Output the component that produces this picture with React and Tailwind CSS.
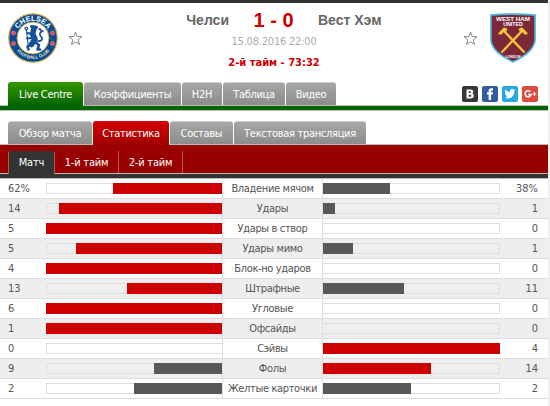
import clsx from 'clsx';

const mainTabs = [
  { label: 'Live Centre', width: 'w-[75px]', active: true },
  { label: 'Коэффициенты', width: 'w-[97px]' },
  { label: 'H2H', width: 'w-10' },
  { label: 'Таблица', width: 'w-[62px]' },
  { label: 'Видео', width: 'w-[50px]' },
];

const matchTabs = [
  { label: 'Обзор матча', width: 'w-[84px]' },
  { label: 'Статистика', width: 'w-[76px]', active: true },
  { label: 'Составы', width: 'w-[63px]' },
  { label: 'Текстовая трансляция', width: 'w-[132px]' },
];

// home / away bars are in pixels, lead marks the side drawn in red
const stats = [
  { name: 'Владение мячом', home: '62%', away: '38%', homeBar: 109, awayBar: 67, lead: 'home' },
  { name: 'Удары', home: 14, away: 1, homeBar: 163, awayBar: 12, lead: 'home' },
  { name: 'Удары в створ', home: 5, away: 0, homeBar: 176, awayBar: 0, lead: 'home' },
  { name: 'Удары мимо', home: 5, away: 1, homeBar: 146, awayBar: 30, lead: 'home' },
  { name: 'Блок-но ударов', home: 4, away: 0, homeBar: 176, awayBar: 0, lead: 'home' },
  { name: 'Штрафные', home: 13, away: 11, homeBar: 95, awayBar: 81, lead: 'home' },
  { name: 'Угловые', home: 6, away: 0, homeBar: 176, awayBar: 0, lead: 'home' },
  { name: 'Офсайды', home: 1, away: 0, homeBar: 176, awayBar: 0, lead: 'home' },
  { name: 'Сэйвы', home: 0, away: 4, homeBar: 0, awayBar: 177, lead: 'away' },
  { name: 'Фолы', home: 9, away: 14, homeBar: 68, awayBar: 108, lead: 'away' },
  { name: 'Желтые карточки', home: 2, away: 2, homeBar: 88, awayBar: 88, lead: null },
];

function Star() {
  return (
    <svg className="w-[15px] h-[15px]" viewBox="0 0 15 15" fill="#fff" stroke="#777" strokeWidth="0.9">
      <path d="M7.5 1.1 9.2 5.5 14 5.7 10.2 8.7 11.5 13.4 7.5 10.8 3.5 13.4 4.8 8.7 1 5.7 5.8 5.5Z" />
    </svg>
  );
}

function ChelseaLogo() {
  return (
    <svg className="w-[50px] h-[50px]" viewBox="0 0 50 50">
      <defs>
        <path id="cfcTop" d="M7.8 25A17.2 17.2 0 0 1 42.2 25" />
        <path id="cfcBottom" d="M4.2 25A20.8 20.8 0 0 0 45.8 25" />
      </defs>
      <circle cx="25" cy="25" r="24.2" fill="#064b95" stroke="#c9a53d" strokeWidth="1.2" />
      <circle cx="25" cy="25" r="16" fill="#fff" stroke="#c9a53d" strokeWidth="1" />
      <text fill="#fff" fontFamily="Liberation Sans, sans-serif" fontWeight="bold" fontSize="7.4" textAnchor="middle">
        <textPath href="#cfcTop" startOffset="50%">CHELSEA</textPath>
      </text>
      <text fill="#f5edc4" fontFamily="Liberation Sans, sans-serif" fontWeight="bold" fontSize="4.4" textAnchor="middle">
        <textPath href="#cfcBottom" startOffset="50%">FOOTBALL CLUB</textPath>
      </text>
      <g fill="#ee4056" stroke="#f08b98" strokeWidth="0.6">
        <circle cx="5.5" cy="20" r="2" />
        <circle cx="5.5" cy="30.5" r="2" />
        <circle cx="44.5" cy="20" r="2" />
        <circle cx="44.5" cy="30.5" r="2" />
      </g>
      <g fill="none" stroke="#164f9e" strokeLinecap="round" strokeLinejoin="round">
        <circle cx="18.3" cy="15.5" r="1.3" strokeWidth="1.2" />
        <path d="M18.5 17 20.6 36" strokeWidth="1.1" />
        <path d="M26 15.5 24.5 21 27 26 23.5 31.5" strokeWidth="5.6" />
        <path d="M24 21 19.2 20M24.5 25 19 25.5" strokeWidth="2" />
        <path d="M23.5 31 19.5 33.5 20.5 36.5M27.5 29.5 31 32 29.5 36.5H32" strokeWidth="2.6" />
        <path d="M29.5 28C33.5 28.5 35.5 26 33 23.6 31 21.5 31.5 19 34.8 18.2M33.5 17.2 31.5 16.5" strokeWidth="1.7" />
        <path d="M23.5 13.5 28.5 14.2" strokeWidth="3" />
      </g>
      <path d="M30.2 15.8 33 15.1" stroke="#e3344b" strokeWidth="0.9" />
    </svg>
  );
}

function WestHamLogo() {
  return (
    <svg className="w-[46px] h-[50px]" viewBox="0 0 46 50">
      <path
        d="M1 2.2Q23 .1 45 2.2V27C44.6 35.5 35 43.5 23 48.8 11 43.5 1.4 35.5 1 27Z"
        fill="#7c2839"
        stroke="#42b3df"
        strokeWidth="1.7"
      />
      <g fill="#fff" fontFamily="Liberation Sans, sans-serif" fontWeight="bold">
        <text x="6" y="8.2" fontSize="6" textLength="34" lengthAdjust="spacingAndGlyphs">WEST HAM</text>
        <text x="13.2" y="13" fontSize="4.6" textLength="19.6" lengthAdjust="spacingAndGlyphs">UNITED</text>
        <text x="15.5" y="44.6" fontSize="3.6" textLength="15" lengthAdjust="spacingAndGlyphs">LONDON</text>
      </g>
      <g stroke="#f6ca36" strokeWidth="2.3" fill="none">
        <path d="M13.5 17.5 34.5 39.5M32.5 17.5 11.5 39.5" />
      </g>
      <g fill="#f6ca36">
        <path d="M8 20.5 14 14.2 17.6 16 16.2 18.8 14 18.7 11 22Z" />
        <path d="M38 20.5 32 14.2 28.4 16 29.8 18.8 32 18.7 35 22Z" />
      </g>
    </svg>
  );
}

function Socials() {
  return (
    <div className="flex gap-1">
      <svg className="size-4" viewBox="0 0 16 16">
        <rect width="16" height="16" rx="2" fill="#373737" />
        <path fill="#fff" fillRule="evenodd" d="M4.5 3.5H8.6C10.4 3.5 11.3 4.4 11.3 5.7 11.3 6.6 10.8 7.3 10 7.6 11.1 7.9 11.8 8.7 11.8 9.8 11.8 11.5 10.6 12.4 8.6 12.4H4.5ZM6.8 5.2V7H8Q9 7 9 6.1 9 5.2 8 5.2ZM6.8 8.7V10.7H8.2Q9.4 10.7 9.4 9.7 9.4 8.7 8.2 8.7Z" />
      </svg>
      <svg className="size-4" viewBox="0 0 16 16">
        <rect width="16" height="16" rx="2" fill="#315b9d" />
        <path fill="#fff" d="M6.6 14V8.5H5V6.2H6.6V5C6.6 3.2 7.7 2.3 9.3 2.3H11V4.6H9.9Q9.1 4.6 9.1 5.4V6.2H11L10.7 8.5H9.1V14Z" />
      </svg>
      <svg className="size-4" viewBox="0 0 16 16">
        <rect width="16" height="16" rx="2" fill="#28a9e0" />
        <path fill="#fff" d="M13.4 4.5 12.2 5C12.4 9.5 9.4 12.4 6 12.4 4.7 12.4 3.5 12 2.6 11.4 3.9 11.5 5 11.1 5.9 10.5 4.8 10.4 4.1 9.8 3.8 8.9H4.8C3.6 8.6 2.9 7.7 2.9 6.4L3.9 6.7C2.8 5.8 2.6 4.6 3.2 3.5 4.4 5 6 5.8 7.9 5.9 7.6 4.3 8.7 3.1 10.1 3.1 10.8 3.1 11.4 3.4 11.8 3.8L13.2 3.3 12.5 4.4Z" />
      </svg>
      <svg className="size-4" viewBox="0 0 16 16">
        <rect width="16" height="16" rx="2" fill="#dd4b3e" />
        <path d="M8.3 5.8A3 3 0 1 0 9 8.5H6.2" fill="none" stroke="#fff" strokeWidth="1.6" />
        <path d="M10.4 8H14.4M12.4 6V10" stroke="#fff" strokeWidth="1.1" />
      </svg>
    </div>
  );
}

function Tabs({ items, activeClass }) {
  return (
    <div className="flex gap-px h-[23px] text-white tracking-[-0.3px]">
      {items.map((tab) => (
        <div
          key={tab.label}
          className={clsx(
            'flex items-center justify-center rounded-t-[3px] whitespace-nowrap',
            tab.width,
            tab.active
              ? clsx('h-6 pt-0.5 z-10', activeClass)
              : 'h-[23px] pt-[3px] border-t border-[#ccc] bg-linear-to-b from-[#a5a7a5] to-[#8b8d8b]'
          )}
        >
          {tab.label}
        </div>
      ))}
    </div>
  );
}

function Bar({ width, side, lead }) {
  return (
    <div
      className={clsx(
        'flex h-[11px] border-y border-[#ddd]',
        side === 'home' ? 'w-44 justify-end border-l' : 'w-[177px] border-r'
      )}
    >
      <div
        className={clsx('h-[11px] -my-px shrink-0', side === 'away' && 'mr-[-1px]', lead ? 'bg-[#c00]' : 'bg-[#585858]')}
        style={{ width }}
      />
    </div>
  );
}

function StatRow({ stat, odd }) {
  return (
    <div className={clsx('flex items-center h-5 border-b border-[#ddd]', odd ? 'bg-[#eee]' : 'bg-white')}>
      <div className="w-[46px] pl-2 pt-px">{stat.home}</div>
      <Bar side="home" width={stat.homeBar} lead={stat.lead === 'home'} />
      <div className="w-[101px] h-[19px] border-x border-[#ddd] text-center leading-[19px] tracking-[-0.35px] whitespace-nowrap">
        {stat.name}
      </div>
      <Bar side="away" width={stat.awayBar} lead={stat.lead === 'away'} />
      <div className="flex-1 pr-2.5 pt-px text-right">{stat.away}</div>
    </div>
  );
}

export default function App() {
  return (
    <div className="w-[550px] h-[406px] overflow-hidden bg-[#efefef] font-['DejaVu_Sans_Condensed','DejaVu_Sans',sans-serif] text-[11px] text-[#555]">
      <div className="w-[548px] h-full bg-white">
        <div className="h-[3px] bg-[#333]" />

        {/* Scoreboard */}
        <div className="flex h-[79px]">
          <div className="flex items-start pl-2 pt-2.5 w-[150px]">
            <ChelseaLogo />
            <div className="pl-2.5 pt-[18px]"><Star /></div>
          </div>
          <div className="w-[248px] pt-1.5 text-center">
            <div className="flex items-center h-[22px] font-['Liberation_Sans',sans-serif] font-bold text-[14px] text-[#666]">
              <div className="w-[79px] text-right">Челси</div>
              <div className="w-[89px] text-[20px] text-[#c00]">1 - 0</div>
              <div className="whitespace-nowrap">Вест Хэм</div>
            </div>
            <div className="h-[21px] leading-[21px] tracking-[-0.2px] text-[#aaa]">15.08.2016 22:00</div>
            <div className="h-[21px] leading-[21px] font-bold text-[#c00]">2-й тайм - 73:32</div>
          </div>
          <div className="flex flex-1 items-start justify-end pr-3 pt-2.5">
            <div className="pr-3 pt-[18px]"><Star /></div>
            <WestHamLogo />
          </div>
        </div>

        <div className="flex justify-between pl-2 pr-2.5 h-[23px]">
          <Tabs items={mainTabs} activeClass="bg-linear-to-b from-[#329600] to-[#006400]" />
          <div className="pt-1"><Socials /></div>
        </div>
        <div className="h-1.5 border-y border-[#bbb] bg-[#006400]" />

        <div className="pl-2 pt-2.5">
          <Tabs items={matchTabs} activeClass="bg-linear-to-b from-[#d80000] to-[#a00000]" />
        </div>
        <div className="flex h-[30px] border-y border-[#bbb] bg-[#900] pl-2 pt-1.5 text-white tracking-[-0.2px]">
          <div className="flex w-[47px] h-[23px] pt-px items-center justify-center border-x border-[#b45b50] rounded-t-[2px] bg-[#333]">Матч</div>
          <div className="flex w-16 h-[22px] pt-0.5 items-center justify-center border-r border-[#b45b50]">1-й тайм</div>
          <div className="flex w-16 h-[22px] pt-0.5 items-center justify-center border-r border-[#b45b50]">2-й тайм</div>
        </div>
        <div className="h-[5px] border-b border-[#bbb] bg-[#333]" />

        <div>
          {stats.map((stat, i) => (
            <StatRow key={stat.name} stat={stat} odd={i % 2 === 1} />
          ))}
        </div>
      </div>
    </div>
  );
}
